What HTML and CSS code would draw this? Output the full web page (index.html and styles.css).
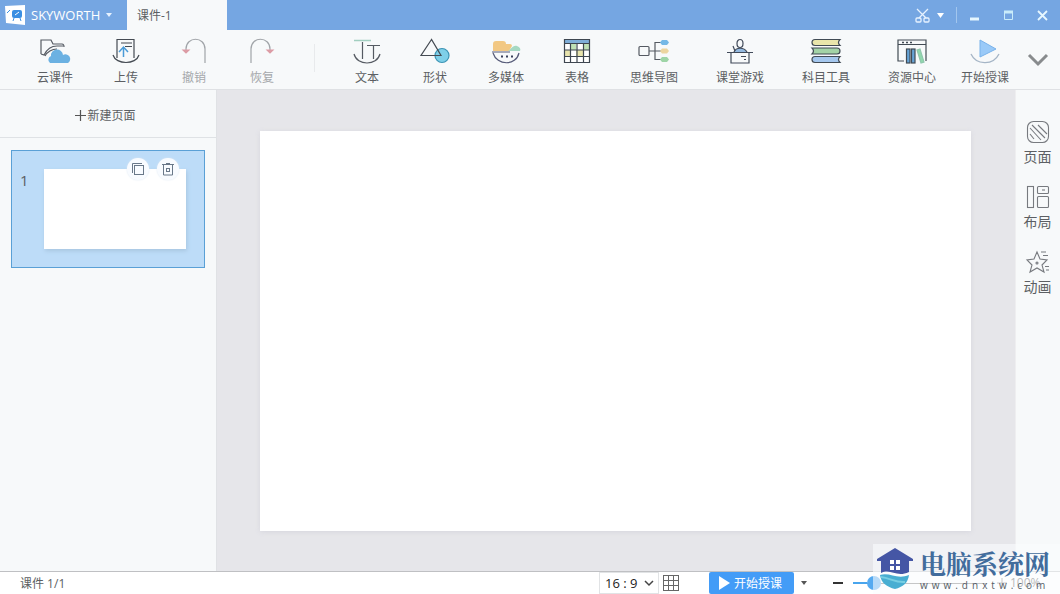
FILE: index.html
```html
<!DOCTYPE html>
<html lang="zh-CN">
<head>
<meta charset="utf-8">
<title>课件-1</title>
<link rel="stylesheet" href="styles.css">
</head>
<body>
<div class="app">
  <header class="titlebar">
    <button class="brand">
      <svg width="20" height="20" viewBox="0 0 20 20"><path d="M0 1L20 0V20L1 18Z" fill="#fff"/><rect x="7" y="5" width="10" height="8" rx="2" fill="#3b8fe2"/><path d="M9 13l-1 3M15 13l1 3M2 8l3-3" stroke="#3b8fe2" fill="none"/><path d="M10 10l4-3" stroke="#fff"/></svg>
      <span>SKYWORTH</span>
      <svg width="6" height="4" viewBox="0 0 6 4"><path d="M0 0h6L3 4z" fill="#e6f2ff"/></svg>
    </button>
    <div class="tab">课件-1</div>
    <div class="window-controls">
      <button class="cut" aria-label="剪切">
        <svg width="15" height="15" viewBox="0 0 15 15" fill="none" stroke="#e6f2ff" stroke-width="1.3"><path d="M2 1l9 9M13 1l-9 9"/><rect x="1" y="10" width="5" height="4" rx="1"/><rect x="9" y="10" width="5" height="4" rx="1"/></svg>
        <svg width="7" height="5" viewBox="0 0 7 5"><path d="M0 0h7L3.500 5z" fill="#fff"/></svg>
      </button>
      <span class="control-divider"></span>
      <button class="win" aria-label="最小化"><svg width="11" height="11" viewBox="0 0 11 11"><path d="M1 9h9" stroke="#e6f7ff" stroke-width="3"/></svg></button>
      <button class="win" aria-label="最大化"><svg width="11" height="11" viewBox="0 0 11 11" fill="none" stroke="#c9ecfa"><path d="M1.500 2v7.500h8V2"/><path d="M1 2h9" stroke-width="3"/></svg></button>
      <button class="win" aria-label="关闭"><svg width="11" height="11" viewBox="0 0 11 11"><path d="M1 1l9 9M10 1l-9 9" stroke="#e6f7ff" stroke-width="1.800"/></svg></button>
    </div>
  </header>

  <nav class="toolbar">
    <button class="tool">
      <svg class="icon" viewBox="0 0 30 28" fill="none" stroke="#555a62" stroke-width="1.200"><path d="M1 16V2h10l2 4h9q2 0 2 3M1 16l3 1c3-6 8-9 13-9h6M5 18c2-4 7-7 12-7"/><path d="M10 25a4 4 0 0 1 1-7 6 6 0 0 1 12-1 4 4 0 0 1 5 8z" fill="#6bb1e2" stroke="none"/></svg>
      <span>云课件</span>
    </button>
    <button class="tool">
      <svg class="icon" viewBox="0 0 30 28" fill="none" stroke="#444a52" stroke-width="1.200"><path d="M6 20V1.500h17V20M10 5h11M14 8.500h7M2 17c3 10 23 10 26 0"/><path d="M12.500 19V9M8 14l4.500-5 4.500 5" stroke="#4a9bd8" stroke-width="1.500"/></svg>
      <span>上传</span>
    </button>
    <button class="tool" disabled>
      <svg class="icon" viewBox="0 0 30 28" fill="none" stroke="#a0a4a8" stroke-width="1.200"><path d="M7 14v-3c0-13 19-13 19 0v14"/><path d="M4 12h6l-3 3z" stroke="#dc9ca5" fill="#dc9ca5"/></svg>
      <span>撤销</span>
    </button>
    <button class="tool" disabled>
      <svg class="icon" viewBox="0 0 30 28" fill="none" stroke="#a0a4a8" stroke-width="1.200"><path d="M23 14v-3C23-2 4-2 4 11v14"/><path d="M20 12h6l-3 3z" stroke="#dc9ca5" fill="#dc9ca5"/></svg>
      <span>恢复</span>
    </button>
    <span class="tool-divider"></span>
    <button class="tool">
      <svg class="icon" viewBox="0 0 30 28" fill="none" stroke="#555a62" stroke-width="1.200"><path d="M2 16c3 12 23 12 26 0M10.500 4v17M15 7.500h13M21.500 7.500V21"/><path d="M2 2.500h17" stroke="#a2cfc0" stroke-width="1.500"/></svg>
      <span>文本</span>
    </button>
    <button class="tool">
      <svg class="icon" viewBox="0 0 30 28" fill="none" stroke="#444a52" stroke-width="1.200"><circle cx="22" cy="17.500" r="7" fill="#7ecfe8" stroke="#3c94b4"/><path d="M11.500 1.500L1 17.500h20z"/></svg>
      <span>形状</span>
    </button>
    <button class="tool">
      <svg class="icon" viewBox="0 0 30 28" fill="none"><path d="M2 13V6q0-3 3-3h7q3 0 3 3h4q2 0 2 2l-3 5z" fill="#f2c883"/><path d="M17 13c3-1 4-6 9-5 3 1 4 3 3 5z" fill="#a6d9c2"/><path d="M2 15c4 13 23 13 26 0M1 14h18" stroke="#555a78" stroke-width="1.200"/><path d="M10 18.500h2m3 0h2m3 0h2" stroke="#38405a" stroke-width="2"/></svg>
      <span>多媒体</span>
    </button>
    <button class="tool">
      <svg class="icon" viewBox="0 0 30 28"><path d="M2 2h26v23H2z" fill="#fff"/><path d="M2 2h26v4H2z" fill="#7faed8"/><path d="M8 6h6v6H8zM21 6h7v6h-7zM14 12h7v7h-7z" fill="#bfe1b5"/><path d="M2 12h6v7H2zM14 12h7v6h-7z" fill="#e7e3ac"/><path d="M2.500 1.500h25v23h-25zM2 5.500h26M2 12h26M2 18.500h26M8.500 6v19M15 6v19M21.500 6v19" fill="none" stroke="#3e4650" stroke-width="1.200"/></svg>
      <span>表格</span>
    </button>
    <button class="tool">
      <svg class="icon" viewBox="0 0 30 28" fill="none" stroke="#555a62" stroke-width="1.200"><rect x="0" y="8.500" width="10" height="9" rx="1"/><path d="M10 13h12M22 4.500h-6v17h6"/><g stroke="none"><path d="M21 4.500l2-2.500h5l2 2.500L28 7h-5z" fill="#75b8e6"/><path d="M21 13l2-2.500h5l2 2.500-2 2.500h-5z" fill="#ecd5a0"/><path d="M21 21.500l2-2.500h5l2 2.500-2 2.500h-5z" fill="#9ed5a7"/></g></svg>
      <span>思维导图</span>
    </button>
    <button class="tool">
      <svg class="icon" viewBox="0 0 30 28" fill="none" stroke="#424b5a" stroke-width="1.200"><ellipse cx="15" cy="5.500" rx="3" ry="4"/><path d="M9 14c2-5 10-5 13 0" fill="#93b9e0"/><path d="M2 14.500h26M6 15v10h18V15M8 8l2 5M16 18.500h5M19 21.500h2"/></svg>
      <span>课堂游戏</span>
    </button>
    <button class="tool">
      <svg class="icon" viewBox="0 0 30 28" stroke="#414b54" stroke-width="1.200"><path d="M29 1.500H4c-4 0-4 6 0 6h25q-3-3 0-6z" fill="#e9e5ab"/><path d="M1 10h25c4 0 4 6 0 6H1q3-3 0-6z" fill="#a3d3a7"/><path d="M29 18.500H4c-4 0-4 6 0 6h25q-3-3 0-6z" fill="#a4c7ee"/></svg>
      <span>科目工具</span>
    </button>
    <button class="tool">
      <svg class="icon" viewBox="0 0 30 28" fill="none" stroke="#424b54" stroke-width="1.200"><path d="M7 23H1V2h28v21M1 6.500h28"/><path d="M5 4.500h2m2 0h2m2 0h2" stroke-width="1.500"/><rect x="9.500" y="11" width="3.500" height="14" fill="#65a3d6"/><rect x="14.500" y="11" width="3.500" height="14" fill="#65a3d6"/><path d="M20 12l3-1 4 13-3 1z" fill="#90d9ad" stroke="#90c7ad"/></svg>
      <span>资源中心</span>
    </button>
    <button class="tool tool-start">
      <svg class="icon" viewBox="0 0 30 28" fill="none"><path d="M10 2l16 9-16 8z" fill="#9acaf8" stroke="#79b2ea"/><path d="M1 16c5 11 22 12 28 0" stroke="#a5b5c6" stroke-width="1.300"/></svg>
      <span>开始授课</span>
    </button>
    <button class="more" aria-label="更多"><svg width="20" height="12" viewBox="0 0 20 12"><path d="M1 1l9 9 9-9" fill="none" stroke="#888b8d" stroke-width="3"/></svg></button>
  </nav>

  <main class="workspace">
    <aside class="pages">
      <button class="new-page"><svg width="11" height="11" viewBox="0 0 11 11"><path d="M5.500 0v11M0 5.500h11" stroke="#555" stroke-width="1.200"/></svg><span>新建页面</span></button>
      <div class="page-card">
        <span class="page-number">1</span>
        <div class="thumb">
          <div class="thumb-actions">
            <button aria-label="复制"><svg width="14" height="14" viewBox="0 0 14 14" fill="none" stroke="#697889"><rect x="3.500" y="3.500" width="9" height="9"/><path d="M1.500 11V1.500H11"/></svg></button>
            <button aria-label="删除"><svg width="14" height="14" viewBox="0 0 14 14" fill="none" stroke="#697889"><path d="M1 2.500h12M2.500 3v10h9V3M5 1.500h4"/><rect x="5.500" y="6.500" width="3" height="3"/></svg></button>
          </div>
        </div>
      </div>
    </aside>
    <section class="stage"><div class="slide"></div></section>
    <aside class="side">
      <button><svg width="24" height="24" viewBox="0 0 24 24" fill="none" stroke="#777a7f" stroke-width="1.100"><rect x="1.500" y="1.500" width="21" height="21" rx="6"/><path d="M4 8l11 12M6 5l13 13M12 5l9 9M4 14l4 5"/></svg><span>页面</span></button>
      <button><svg width="24" height="24" viewBox="0 0 24 24" fill="none" stroke="#777a7f" stroke-width="1.100"><rect x="1.500" y="1.500" width="6" height="21"/><rect x="11.500" y="1.500" width="11" height="7" rx="1"/><rect x="11.500" y="11.500" width="11" height="11" rx="1"/><path d="M16 5h3"/></svg><span>布局</span></button>
      <button><svg width="24" height="24" viewBox="0 0 24 24" fill="none" stroke="#777a7f" stroke-width="1.100"><path d="M11 2l3 7 7 1-5 5 2 7-7-4-7 4 2-7-5-5 7-1zM15 2h5M17 5.500h5M19 16.500h4M20 20h3"/><circle cx="11" cy="13" r="1"/></svg><span>动画</span></button>
    </aside>
  </main>

  <footer class="status">
    <span class="page-count">课件 1/1</span>
    <div class="ratio">
      <select aria-label="页面比例"><option>16 : 9</option><option>4 : 3</option></select>
      <svg class="ratio-arrow" width="8" height="6" viewBox="0 0 8 6"><path d="M0 1l4 4 4-4" fill="none" stroke="#444" stroke-width="1.500"/></svg>
    </div>
    <button class="grid" aria-label="网格"><svg width="18" height="18" viewBox="0 0 18 18"><path d="M1 1.500h16M1 6.500h16M1 11.500h16M1 16.500h16M1.500 1v16M6.500 1v16M11.500 1v16M16.500 1v16" stroke="#666"/></svg></button>
    <button class="start"><svg width="11" height="14" viewBox="0 0 11 14"><path d="M0 0l11 7-11 7z" fill="#fff"/></svg><span>开始授课</span></button>
    <button class="start-menu" aria-label="授课选项"><svg width="6" height="4" viewBox="0 0 6 4"><path d="M0 0h6L3 4z" fill="#555"/></svg></button>
    <button class="minus" aria-label="缩小"><svg width="10" height="2" viewBox="0 0 10 2"><path d="M0 1h10" stroke="#333" stroke-width="2"/></svg></button>
    <input class="zoom" type="range" min="0" max="100" value="12" aria-label="缩放">
    <button class="plus" aria-label="放大"><svg width="10" height="10" viewBox="0 0 10 10"><path d="M5 0v10M0 5h10" stroke="#777"/></svg></button>
    <span class="percent">100%</span>
  </footer>

  <div class="watermark">
    <svg width="38" height="44" viewBox="0 0 38 44"><path d="M19 1L1 12v2h4v12c10-5 15 5 28-1V14h4v-2z" fill="#4556a5"/><path d="M14 13h4v4h-4zM20 13h4v4h-4zM14 19h4v4h-4zM20 19h4v4h-4z" fill="#fff"/><path d="M4 28c10-3 17 5 29 0-1 8-6 12-14 14C11 40 5 36 4 28z" fill="#48aed2"/><path d="M5 30c9 1 15 6 24 5" stroke="#78cfe3" stroke-width="2" fill="none"/></svg>
    <div class="mark-text"><span class="mark-name">电脑系统网</span><span class="mark-url">www.dnxtw.com</span></div>
  </div>
</div>
</body>
</html>
```
FILE: styles.css
```css
* { box-sizing: border-box; }
body {
  margin: 0;
  font-family: "Open Sans", "Noto Sans CJK SC", sans-serif;
  font-size: 12px;
  line-height: 16px;
  color: #5c5f63;
}
button {
  padding: 0;
  border: 0;
  background: none;
  font: inherit;
  color: inherit;
}
svg { display: block; flex: none; overflow: visible; }
.app {
  position: relative;
  display: flex;
  flex-direction: column;
  height: 100vh;
  background: #f7f9fa;
  overflow: hidden;
}
.titlebar {
  display: flex;
  flex: none;
  height: 30px;
  background: #75a6e2;
}
.brand {
  display: flex;
  align-items: center;
  gap: 6px;
  width: 127px;
  padding-left: 5px;
  font-size: 13px;
  color: #fff;
}
.tab {
  width: 100px;
  padding: 8px 10px;
  background: #f7f9fa;
}
.window-controls {
  display: flex;
  align-items: center;
  margin-left: auto;
  padding-right: 12px;
}
.cut {
  display: flex;
  align-items: center;
  gap: 7px;
}
.control-divider {
  width: 1px;
  height: 16px;
  margin: 0 12px;
  background: #a2c6ee;
}
.win { width: 11px; }
.win + .win { margin-left: 23px; }
.toolbar {
  display: flex;
  flex: none;
  height: 60px;
  padding-left: 18px;
  background: #f7f9fa;
  border-bottom: 1px solid #dfe1e4;
}
.tool {
  display: flex;
  flex: none;
  flex-direction: column;
  align-items: center;
  gap: 4px;
  padding: 8px 19px 0;
  white-space: nowrap;
}
.tool:disabled { color: #a5a8ab; }
.tool-start { padding: 8px 6px 0; }
.icon { width: 30px; height: 28px; }
.tool-divider {
  width: 1px;
  height: 28px;
  margin: 14px 18px 0;
  background: #e8eaec;
}
.more {
  display: flex;
  flex: 1;
  align-items: center;
  justify-content: center;
}
.workspace {
  display: flex;
  flex: 1;
  min-height: 0;
}
.pages {
  flex: none;
  width: 217px;
  border-right: 1px solid #e0e2e5;
}
.new-page {
  display: flex;
  align-items: center;
  justify-content: center;
  gap: 1px;
  width: 100%;
  height: 48px;
  padding: 4px 5px 0 0;
  border-bottom: 1px solid #dfe2e5;
}
.page-card {
  display: flex;
  gap: 9px;
  margin: 12px 11px;
  padding: 18px 18px 18px 8px;
  background: #bddcf8;
  border: 1px solid #5aa0d6;
}
.page-number {
  width: 15px;
  padding-top: 3px;
  font-size: 15px;
}
.thumb {
  position: relative;
  flex: 1;
  height: 80px;
  background: #fff;
  box-shadow: 1px 2px 4px #a8c6e0;
}
.thumb-actions {
  position: absolute;
  top: -11px;
  right: 7px;
  display: flex;
  gap: 8px;
}
.thumb-actions button {
  display: flex;
  align-items: center;
  justify-content: center;
  width: 22px;
  height: 22px;
  border-radius: 50%;
  background: #f8fbff;
  box-shadow: 0 0 2px #dde8f3;
}
.stage {
  display: flex;
  flex: 1;
  padding: 41px 44px 40px 43px;
  background: #e6e6ea;
}
.slide {
  flex: 1;
  background: #fff;
  box-shadow: 0 1px 5px #d6d6dd;
}
.side {
  display: flex;
  flex: none;
  flex-direction: column;
  gap: 19px;
  width: 45px;
  padding: 30px 1px 0 0;
  border-left: 1px solid #eeeef0;
  font-size: 14px;
}
.side button {
  display: flex;
  flex-direction: column;
  align-items: center;
  gap: 5px;
  height: 46px;
}
.status {
  display: flex;
  flex: none;
  align-items: center;
  height: 23px;
  padding-right: 14px;
  background: #fff;
  border-top: 1px solid #bfc0c3;
}
.page-count {
  flex: 1;
  padding: 2px 0 0 20px;
}
.ratio {
  position: relative;
  width: 60px;
  height: 22px;
}
.ratio select {
  appearance: none;
  width: 100%;
  height: 100%;
  padding: 0 5px;
  border: 1px solid #e1e3e5;
  background: #fff;
  font: 13px "Open Sans", sans-serif;
  color: #222;
}
.ratio-arrow {
  position: absolute;
  right: 6px;
  top: 8px;
  pointer-events: none;
}
.grid { margin-left: 3px; }
.start {
  display: flex;
  align-items: center;
  gap: 4px;
  height: 22px;
  margin-left: 29px;
  padding: 0 12px 0 10px;
  border-radius: 2px;
  background: #439cf7;
  color: #fff;
}
.start span { padding-top: 2px; }
.start-menu { margin-left: 7px; }
.minus { margin-left: 26px; }
.zoom {
  appearance: none;
  width: 134px;
  height: 14px;
  margin: 0 0 0 10px;
  background: linear-gradient(#49a5ed, #49a5ed) left center / 14px 2px no-repeat, linear-gradient(#777, #777) center / 100% 1px no-repeat;
}
.zoom::-webkit-slider-thumb {
  appearance: none;
  width: 14px;
  height: 14px;
  border-radius: 50%;
  background: #55aaf0;
}
.plus { margin-left: 10px; }
.percent {
  width: 36px;
  margin-left: 3px;
  color: #555;
}
.watermark {
  position: absolute;
  right: 0;
  bottom: 0;
  display: flex;
  gap: 6px;
  width: 187px;
  height: 50px;
  padding: 3px 0 0 3px;
  background: rgba(250, 251, 253, 0.6);
  pointer-events: none;
}
.mark-text {
  display: flex;
  flex: 1;
  flex-direction: column;
}
.mark-name {
  font: bold 26px/32px "Noto Serif CJK SC", "Noto Sans CJK SC", sans-serif;
  color: #426c9c;
  white-space: nowrap;
}
.mark-url {
  font-size: 10px;
  line-height: 12px;
  letter-spacing: 4px;
  color: #555d66;
}
```
